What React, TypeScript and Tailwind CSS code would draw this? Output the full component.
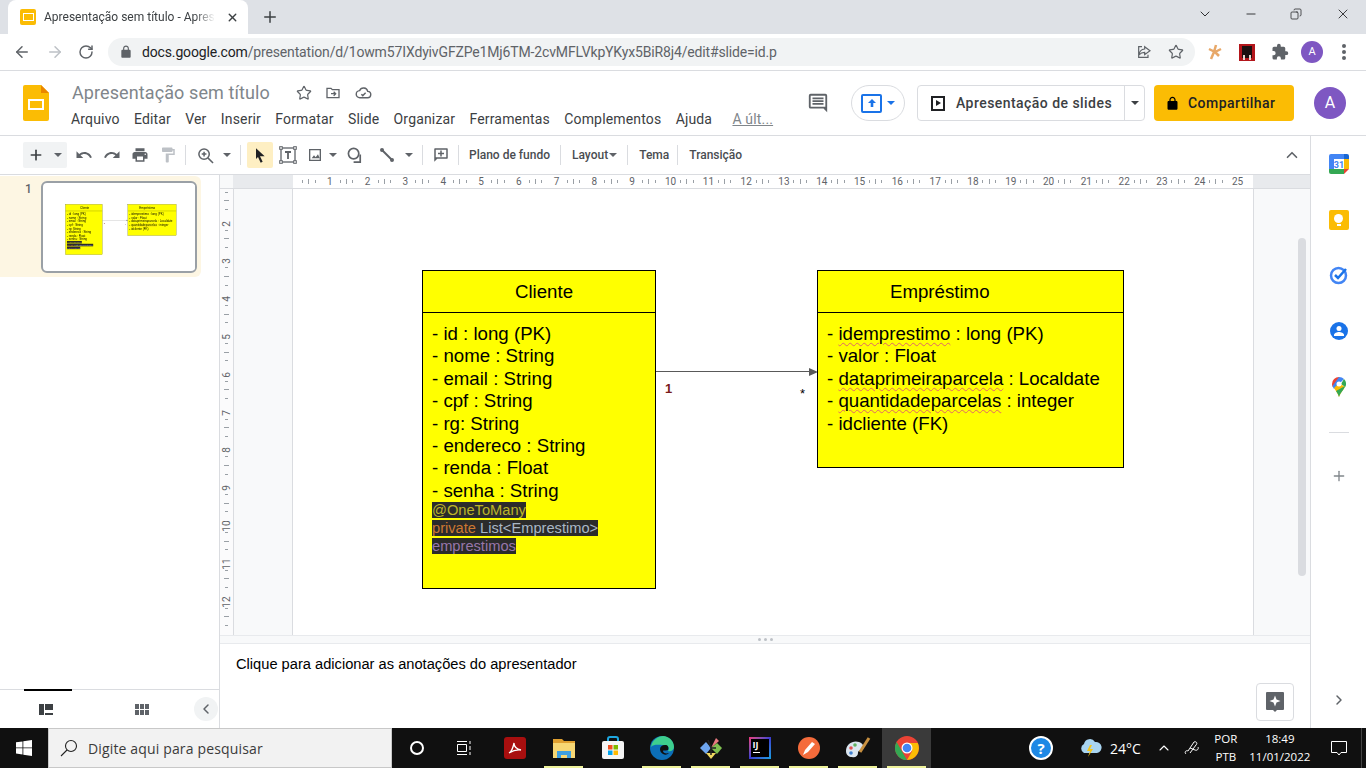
import type { ReactNode } from "react";
import {
  ArrowLeft,
  ArrowRight,
  ChevronDown,
  ChevronLeft,
  ChevronRight,
  ChevronUp,
  Copy,
  Minus,
  Plus,
  RotateCw,
  Star,
  X,
} from "lucide-react";

const menus = ["Arquivo", "Editar", "Ver", "Inserir", "Formatar", "Slide", "Organizar", "Ferramentas", "Complementos", "Ajuda"];

const clienteRows = [
  "- id : long (PK)",
  "- nome : String",
  "- email : String",
  "- cpf : String",
  "- rg: String",
  "- endereco : String",
  "- renda : Float",
  "- senha : String",
];

const lockPath =
  "M18 8h-1V6c0-2.760-2.240-5-5-5S7 3.240 7 6v2H6c-1.100 0-2 .900-2 2v10c0 1.100.900 2 2 2h12c1.100 0 2-.900 2-2V10c0-1.100-.900-2-2-2zM9 6c0-1.660 1.340-3 3-3s3 1.340 3 3v2H9V6z";

const Icon = ({ d, size = 18, color = "#5f6368", view = 24 }: { d: string; size?: number; color?: string; view?: number }) => (
  <svg width={size} height={size} viewBox={`0 0 ${view} ${view}`} fill={color}>
    <path d={d} />
  </svg>
);

const Caret = ({ color = "#5f6368" }: { color?: string }) => (
  <span className="block h-0 w-0 border-x-[4px] border-t-[4px] border-x-transparent" style={{ borderTopColor: color }} />
);

const Sep = () => <span className="block h-[20px] w-px bg-[#dadce0]" />;

const Squiggle = ({ children }: { children: ReactNode }) => (
  <span className="underline decoration-wavy decoration-[#e06666] decoration-1 underline-offset-2">{children}</span>
);

const Ruler = () => (
  <div className="flex h-[13px] w-[960px] bg-white text-[10px] leading-[13px] text-[#5f6368]">
    {Array.from({ length: 25 }, (_, i) => (
      <div key={i} className="flex w-[37.8px] shrink-0 items-center justify-between pl-[9px]">
        <span className="h-[3px] w-px bg-[#9aa0a6]" />
        <span className="h-[5px] w-px bg-[#9aa0a6]" />
        <span className="h-[3px] w-px bg-[#9aa0a6]" />
        <span className="w-[10px] translate-x-[4px] text-center">{i + 1}</span>
      </div>
    ))}
  </div>
);

const VerticalRuler = () => (
  <div className="flex w-[13px] flex-col items-center bg-[#fbfbfc] text-[10px] text-[#5f6368]">
    {Array.from({ length: 13 }, (_, i) => (
      <div key={i} className="flex h-[37.8px] w-full shrink-0 flex-col items-center justify-between">
        <span className="h-px w-[3px] bg-[#9aa0a6]" />
        <span className="h-px w-[5px] bg-[#9aa0a6]" />
        <span className="h-px w-[3px] bg-[#9aa0a6]" />
        <span className="flex h-[12px] -rotate-90 items-center leading-none">{i >= 1 && i < 12 ? i + 1 : ""}</span>
      </div>
    ))}
  </div>
);

// slide content, also used scaled down for the thumbnail
const Slide = () => (
  <div className="relative h-[540px] w-[960px] bg-white font-['Liberation_Sans',sans-serif] text-black">
    <div className="absolute left-[129px] top-[122px] flex h-[319px] w-[234px] flex-col border border-black bg-[#ffff00]">
      <div className="flex h-[42px] shrink-0 items-center justify-center border-b border-black pl-[10px] text-[18.67px]">Cliente</div>
      <div className="px-[9px] pt-[10px] text-[18.67px] leading-[22.4px]">
        {clienteRows.map((row) => (
          <div key={row}>{row}</div>
        ))}
        <div className="text-[14.67px] leading-[17.8px]">
          <div><span className="bg-[#2b2b2b] text-[#bbb529]">@OneToMany</span></div>
          <div>
            <span className="bg-[#2b2b2b]">
              <span className="text-[#cc7832]">private </span>
              <span className="text-[#a9b7c6]">List&lt;Emprestimo&gt;</span>
            </span>
          </div>
          <div><span className="bg-[#2b2b2b] text-[#9876aa]">emprestimos</span></div>
        </div>
      </div>
    </div>

    <div className="absolute left-[363px] top-[223px] h-px w-[155px] bg-[#595959]" />
    <div className="absolute left-[516px] top-[220px] h-0 w-0 border-y-[4px] border-l-[9px] border-y-transparent border-l-[#595959]" />
    <div className="absolute left-[372px] top-[233px] text-[13px] font-bold leading-[15px] text-[#7a1c1c]">1</div>
    <div className="absolute left-[507px] top-[238px] text-[13px] leading-[15px]">*</div>

    <div className="absolute left-[524px] top-[122px] flex h-[198px] w-[307px] flex-col border border-black bg-[#ffff00]">
      <div className="flex h-[42px] shrink-0 items-center border-b border-black pl-[72px] text-[18.67px]">Empréstimo</div>
      <div className="px-[9px] pt-[10px] text-[18.67px] leading-[22.4px]">
        <div>- <Squiggle>idemprestimo</Squiggle> : long (PK)</div>
        <div>- valor : Float</div>
        <div>- <Squiggle>dataprimeiraparcela</Squiggle> : Localdate</div>
        <div>- <Squiggle>quantidadeparcelas</Squiggle> : integer</div>
        <div>- idcliente (FK)</div>
      </div>
    </div>
  </div>
);

const ChromeBar = () => (
  <>
    <div className="flex h-[34px] shrink-0 items-end bg-[#dee1e6] pl-[8px]">
      <div className="flex h-[34px] w-[240px] items-center rounded-t-[8px] bg-white pl-[12px] pr-[9px] text-[12px] text-[#3c4043]">
        <span className="flex h-[16px] w-[16px] shrink-0 items-center justify-center rounded-[2px] bg-[#fbbc04]">
          <span className="h-[8px] w-[11px] border border-white" />
        </span>
        <span className="ml-[8px] whitespace-nowrap [mask-image:linear-gradient(to_right,black_88%,transparent)]">Apresentação sem título - Apres</span>
        <X size={13} strokeWidth={2.5} className="ml-auto text-[#3c4043]" />
      </div>
      <Plus size={18} strokeWidth={2} className="mb-[8px] ml-[13px] text-[#3c4043]" />
      <div className="ml-auto flex h-[28px] items-center self-start text-[#202124]">
        <ChevronDown size={16} strokeWidth={1.4} className="mr-[31px]" />
        <Minus size={14} strokeWidth={1.5} className="mr-[32px]" />
        <Copy size={12} strokeWidth={1.5} className="mr-[33px] -scale-x-100" />
        <X size={16} strokeWidth={1.3} className="mr-[15px]" />
      </div>
    </div>
    <div className="flex h-[37px] shrink-0 items-center border-b border-[#dadce0] bg-white">
      <ArrowLeft size={18} strokeWidth={2} className="ml-[13px] text-[#5f6368]" />
      <ArrowRight size={18} strokeWidth={2} className="ml-[15px] text-[#bdc1c6]" />
      <RotateCw size={16} strokeWidth={2.2} className="ml-[14px] text-[#5f6368]" />
      <div className="ml-[14px] flex h-[28px] w-[1087px] items-center rounded-full bg-[#f1f3f4] pl-[11px] pr-[10px] text-[14px] tracking-[-0.15px] text-[#5f6368]">
        <Icon d={lockPath} size={14} />
        <span className="ml-[9px] whitespace-nowrap">
          <span className="text-[#202124]">docs.google.com</span>/presentation/d/1owm57IXdyivGFZPe1Mj6TM-2cvMFLVkpYKyx5BiR8j4/edit#slide=id.p
        </span>
        <span className="ml-auto mr-[16px]">
          <svg width="16" height="16" viewBox="0 0 24 24" fill="none" stroke="#5f6368" strokeWidth="1.8">
            <path d="M13 4l8 6-8 6v-3.500c-4 0-6.500 1.500-8.500 4 .5-5 3.500-8.500 8.500-9V4zM9 4H4v16h14v-4" />
          </svg>
        </span>
        <Star size={16} strokeWidth={1.8} className="mr-[1px]" />
      </div>
      <svg className="ml-[11px]" width="18" height="18" viewBox="0 0 18 18" fill="none">
        <path d="M10 2L8 9M8 9l-3 7M3 6l6 3M9 9l6-3M9 9l4 4" stroke="#e8a868" strokeWidth="2.5" />
      </svg>
      <svg className="ml-[15px]" width="16" height="17" viewBox="0 0 16 17">
        <rect width="16" height="17" fill="#b3161b" />
        <rect x="3" y="2" width="10" height="12" fill="#1c1010" />
        <path d="M4 16v-5h2v5zM10 16v-5h2v5z" fill="#e8d8d0" />
      </svg>
      <svg className="ml-[16px]" width="18" height="18" viewBox="0 0 24 24" fill="#5f6368">
        <path d="M20.500 11H19V7a2 2 0 0 0-2-2h-4V3.500a2.500 2.500 0 0 0-5 0V5H4a2 2 0 0 0-2 2v3.800h1.500a2.700 2.700 0 0 1 0 5.400H2V20a2 2 0 0 0 2 2h3.800v-1.500a2.700 2.700 0 0 1 5.400 0V22H17a2 2 0 0 0 2-2v-4h1.500a2.500 2.500 0 0 0 0-5z" />
      </svg>
      <span className="ml-[12px] flex h-[22px] w-[22px] shrink-0 items-center justify-center rounded-full bg-[#7e57c2] text-[11px] text-white">A</span>
      <svg className="ml-[19px] shrink-0" width="4" height="16" viewBox="0 0 4 16" fill="#5f6368">
        <circle cx="2" cy="2" r="2" />
        <circle cx="2" cy="8" r="2" />
        <circle cx="2" cy="14" r="2" />
      </svg>
    </div>
  </>
);

const DocsHeader = () => (
  <div className="flex h-[65px] shrink-0 border-b border-[#dadce0] bg-white">
    <svg className="ml-[23px] mt-[14px]" width="26" height="36" viewBox="0 0 26 36">
      <path d="M2 0h16l8 8v26a2 2 0 0 1-2 2H2a2 2 0 0 1-2-2V2a2 2 0 0 1 2-2z" fill="#fbbc04" />
      <path d="M18 0l8 8h-8z" fill="#ea8600" />
      <rect x="6" y="15" width="14" height="9" fill="none" stroke="#fff" strokeWidth="2" />
    </svg>
    <div className="ml-[22px] flex flex-col">
      <div className="mt-[10px] flex h-[24px] items-center">
        <span className="pl-[1px] text-[18px] leading-[24px] tracking-[0.1px] text-[#80868b]">Apresentação sem título</span>
        <Star size={16} strokeWidth={1.8} className="ml-[26px] text-[#5f6368]" />
        <svg className="ml-[13px]" width="16" height="16" viewBox="0 0 24 24" fill="none" stroke="#5f6368" strokeWidth="2">
          <path d="M3 5h6l2 2h10v12H3zM9 13h7m-3-3l3 3-3 3" />
        </svg>
        <svg className="ml-[14px]" width="17" height="17" viewBox="0 0 24 24" fill="none" stroke="#5f6368" strokeWidth="2">
          <path d="M7 18a5 5 0 0 1-.500-10A6 6 0 0 1 18 9a4.500 4.500 0 0 1-.500 9zM9 13l2 2 4-4" />
        </svg>
      </div>
      <div className="mt-[4px] flex items-center gap-[14.3px] text-[14px] leading-[20px] tracking-[0.16px] text-[#3c4043]">
        {menus.map((m) => (
          <span key={m}>{m}</span>
        ))}
        <span className="ml-[6px] text-[#80868b] underline">A últ...</span>
      </div>
    </div>
    <div className="ml-auto flex items-start pt-[14px]">
      <svg className="mt-[7px]" width="22" height="22" viewBox="0 0 24 24" fill="#5f6368">
        <path d="M22 4a2 2 0 0 0-2-2H4a2 2 0 0 0-2 2v12a2 2 0 0 0 2 2h14l4 4zM20 16H4V4h16zM6 12h12v2H6zM6 9h12v2H6zM6 6h12v2H6z" />
      </svg>
      <div className="ml-[22px] flex h-[36px] w-[54px] items-center justify-center gap-[5px] rounded-full border border-[#dadce0]">
        <span className="flex h-[19px] w-[21px] items-center justify-center rounded-[2px] border-2 border-[#1a73e8]">
          <svg width="10" height="10" viewBox="0 0 10 10" fill="#1a73e8"><path d="M5 1l4 4H6.300v4H3.700V5H1z" /></svg>
        </span>
        <Caret color="#1a73e8" />
      </div>
      <div className="ml-[12px] flex h-[36px] w-[228px] items-center rounded-[4px] border border-[#dadce0] text-[14px] font-medium tracking-[0.45px] text-[#3c4043]">
        <span className="ml-[13px] flex h-[15px] w-[14px] items-center justify-center border-2 border-[#202124]">
          <span className="h-0 w-0 border-y-[3px] border-l-[5px] border-y-transparent border-l-[#202124]" />
        </span>
        <span className="ml-[11px] whitespace-nowrap">Apresentação de slides</span>
        <span className="ml-auto flex h-full w-[20px] items-center justify-center border-l border-[#dadce0]">
          <Caret color="#3c4043" />
        </span>
      </div>
      <div className="ml-[9px] flex h-[36px] w-[140px] items-center rounded-[4px] bg-[#fbbc04] pl-[11px] text-[14px] font-medium tracking-[0.45px] text-[#202124]">
        <Icon d={lockPath} size={15} color="#000" />
        <span className="ml-[8px]">Compartilhar</span>
      </div>
      <span className="ml-[20px] mr-[20px] mt-[2px] flex h-[32px] w-[32px] items-center justify-center rounded-full bg-[#7e57c2] text-[16px] text-white">A</span>
    </div>
  </div>
);

const Tool = ({ children, w = 28 }: { children: ReactNode; w?: number }) => (
  <span className="flex h-[26px] shrink-0 items-center justify-center" style={{ width: w }}>
    {children}
  </span>
);

const Toolbar = () => (
  <div className="flex h-[39px] shrink-0 items-center border-b border-[#dadce0] bg-white pl-[23px] pr-[9px]">
    <div className="flex h-[26px] w-[44px] items-center justify-center gap-[10px] rounded-[2px] bg-[#f1f3f4]">
      <Plus size={16} strokeWidth={2.5} className="text-[#3c4043]" />
      <Caret />
    </div>
    <span className="w-[3px]" />
    <Tool><Icon d="M12.500 8c-2.650 0-5.050 1-6.900 2.600L2 7v9h9l-3.620-3.620c1.390-1.160 3.160-1.880 5.120-1.880 3.540 0 6.550 2.310 7.600 5.500l2.370-.780C21.080 11.030 17.150 8 12.500 8z" /></Tool>
    <Tool><Icon d="M18.400 10.600C16.550 9 14.150 8 11.500 8c-4.650 0-8.580 3.030-9.960 7.220L3.900 16c1.050-3.190 4.050-5.500 7.600-5.500 1.950 0 3.730.720 5.120 1.880L13 16h9V7z" /></Tool>
    <Tool><Icon d="M19 8H5c-1.660 0-3 1.340-3 3v6h4v4h12v-4h4v-6c0-1.660-1.340-3-3-3zm-3 11H8v-5h8v5zm3-7c-.550 0-1-.450-1-1s.450-1 1-1 1 .450 1 1-.450 1-1 1zm-1-9H6v4h12V3z" /></Tool>
    <Tool><Icon color="#bdc1c6" d="M18 4V3c0-.550-.450-1-1-1H5c-.550 0-1 .450-1 1v4c0 .550.450 1 1 1h12c.550 0 1-.450 1-1V6h1v4H9v11c0 .550.450 1 1 1h2c.550 0 1-.450 1-1v-9h8V4h-3z" /></Tool>
    <span className="ml-[3px] mr-[4px]"><Sep /></span>
    <Tool w={30}>
      <svg width="17" height="17" viewBox="0 0 18 18" fill="none" stroke="#5f6368" strokeWidth="1.600">
        <circle cx="7.500" cy="7.500" r="5.500" />
        <path d="M11.500 11.500L17 17M7.500 5v5M5 7.500h5" />
      </svg>
    </Tool>
    <Tool w={14}><Caret /></Tool>
    <span className="mx-[6px]"><Sep /></span>
    <span className="flex h-[26px] w-[26px] items-center justify-center rounded-[2px] bg-[#feefc3]">
      <Icon size={16} color="#202124" d="M6 2l13 12h-7l4 8-3 1.500-4-8.500-3 3z" />
    </span>
    <Tool w={30}>
      <svg width="18" height="18" viewBox="0 0 18 18" fill="none" stroke="#5f6368" strokeWidth="1.300">
        <rect x="2" y="2" width="14" height="14" />
        <path d="M6 6h6M9 6v7" strokeWidth="1.800" />
        <rect x=".7" y=".7" width="2.600" height="2.600" fill="#fff" strokeWidth="1" />
        <rect x="14.700" y=".7" width="2.600" height="2.600" fill="#fff" strokeWidth="1" />
        <rect x=".7" y="14.700" width="2.600" height="2.600" fill="#fff" strokeWidth="1" />
        <rect x="14.700" y="14.700" width="2.600" height="2.600" fill="#fff" strokeWidth="1" />
      </svg>
    </Tool>
    <Tool w={24}><Icon size={16} d="M21 3H3v18h18zm-2 16H5V5h14zM7 17l3.500-4.500 2.500 3 3.500-4.500 2.500 6z" /></Tool>
    <Tool w={12}><Caret /></Tool>
    <Tool w={32}>
      <svg width="17" height="17" viewBox="0 0 18 18" fill="none" stroke="#5f6368" strokeWidth="1.800">
        <circle cx="7" cy="7" r="5.500" />
        <path d="M14 8v8H7" />
      </svg>
    </Tool>
    <Tool w={31}>
      <svg width="16" height="16" viewBox="0 0 16 16" stroke="#5f6368" strokeWidth="2" fill="#5f6368">
        <path d="M3 3l10 10" />
        <circle cx="3" cy="3" r="1" />
        <circle cx="13" cy="13" r="1" />
      </svg>
    </Tool>
    <Tool w={14}><Caret /></Tool>
    <span className="mx-[6px]"><Sep /></span>
    <Tool w={24}><Icon size={18} d="M20 3H4a1 1 0 0 0-1 1v17l4-4h13a1 1 0 0 0 1-1V4a1 1 0 0 0-1-1zm-1 12H5V5h14zM11 6h2v3h3v2h-3v3h-2v-3H8V9h3z" /></Tool>
    <span className="ml-[5px]"><Sep /></span>
    <div className="flex items-center text-[12px] font-medium text-[#4a4d51]">
      <span className="ml-[10px]">Plano de fundo</span>
      <span className="ml-[10px]"><Sep /></span>
      <span className="ml-[11px]">Layout</span>
      <span className="ml-[1px]"><Caret /></span>
      <span className="ml-[10px]"><Sep /></span>
      <span className="ml-[11px]">Tema</span>
      <span className="ml-[8px]"><Sep /></span>
      <span className="ml-[11px]">Transição</span>
    </div>
    <ChevronUp size={18} strokeWidth={2.2} className="ml-auto text-[#5f6368]" />
  </div>
);

const Filmstrip = () => (
  <div className="flex w-[220px] shrink-0 flex-col border-r border-[#dadce0] bg-white">
    <div className="flex-1">
      <div className="mt-[1px] flex h-[101px] w-[201px] rounded-r-[6px] bg-[#fdf6e3]">
        <span className="ml-[25px] mt-[4px] text-[12px] font-medium text-[#5f6368]">1</span>
        <div className="ml-[9px] mt-[5px] h-[92px] w-[156px] overflow-hidden rounded-[6px] border-2 border-[#9aa0a6] bg-white pl-[2px] pt-[2px]">
          <div className="h-[85px] w-[152px] overflow-hidden">
            <div className="origin-top-left scale-[0.158]">
              <Slide />
            </div>
          </div>
        </div>
      </div>
    </div>
    <div className="relative flex h-[39px] shrink-0 items-center border-t border-[#dadce0]">
      <span className="absolute left-[24px] top-[-1px] h-[2px] w-[48px] bg-black" />
      <span className="ml-[39px] flex h-[11px] w-[14px] gap-[1px]">
        <span className="h-full w-[5px] bg-[#3c4043]" />
        <span className="flex flex-1 flex-col justify-between">
          <span className="h-[6px] bg-[#3c4043]" />
          <span className="h-[2px] bg-[#3c4043]" />
        </span>
      </span>
      <span className="ml-[82px] grid h-[11px] w-[14px] grid-cols-3 gap-[1px]">
        {Array.from({ length: 6 }, (_, i) => (
          <span key={i} className="bg-[#5f6368]" />
        ))}
      </span>
      <span className="ml-[45px] flex h-[24px] w-[24px] items-center justify-center rounded-full bg-[#f1f3f4]">
        <ChevronLeft size={16} strokeWidth={2.2} className="text-[#5f6368]" />
      </span>
    </div>
  </div>
);

const Editor = () => (
  <div className="flex min-w-0 flex-1 flex-col">
    <div className="flex h-[460px] shrink-0 flex-col bg-[#f8f9fa]">
      <div className="flex h-[14px] shrink-0 border-b border-[#dadce0] bg-[#e8eaed]">
        <span className="w-[13px] shrink-0 bg-[#f8f9fa]" />
        <span className="w-[60px] shrink-0" />
        <Ruler />
      </div>
      <div className="relative flex flex-1 overflow-hidden">
        <div className="h-full overflow-hidden border-r border-[#dadce0]">
          <div className="mt-[-35px]">
            <VerticalRuler />
          </div>
        </div>
        <div className="ml-[58px] h-full overflow-hidden border-l border-r border-[#dadce0]">
          <div className="mt-[-41px]">
            <Slide />
          </div>
        </div>
        <span className="absolute left-[1078px] top-[49px] h-[338px] w-[8px] rounded-full bg-[#dadce0]" />
      </div>
    </div>
    <div className="flex h-[9px] shrink-0 items-center justify-center gap-[3px] border-y border-[#e8eaed] bg-[#f8f9fa]">
      <span className="h-[3px] w-[3px] rounded-full bg-[#bdc1c6]" />
      <span className="h-[3px] w-[3px] rounded-full bg-[#bdc1c6]" />
      <span className="h-[3px] w-[3px] rounded-full bg-[#bdc1c6]" />
    </div>
    <div className="flex flex-1 flex-col bg-white pl-[16px] pr-[16px] font-['Liberation_Sans',sans-serif]">
      <div className="mt-[11px] text-[14.67px] leading-[18px] text-black">Clique para adicionar as anotações do apresentador</div>
      <div className="mt-auto mb-[7px] flex h-[38px] w-[38px] items-center justify-center self-end rounded-[4px] border border-[#dadce0]">
        <svg width="18" height="20" viewBox="0 0 18 20">
          <path d="M1 0h16a1 1 0 0 1 1 1v16a1 1 0 0 1-1 1h-6l-2 2-2-2H1a1 1 0 0 1-1-1V1a1 1 0 0 1 1-1z" fill="#5f6368" />
          <path d="M9 3.500l1.500 4 4 1.500-4 1.500-1.500 4-1.500-4-4-1.500 4-1.500z" fill="#fff" />
        </svg>
      </div>
    </div>
  </div>
);

const SidePanel = () => (
  <div className="flex w-[56px] shrink-0 flex-col items-center border-l border-[#dadce0] bg-white">
    <svg className="mt-[18px]" width="20" height="20" viewBox="0 0 20 20">
      <rect width="20" height="20" rx="2" fill="#fff" />
      <path d="M5 0h10v5H5z" fill="#4285f4" />
      <path d="M0 5h5v10H0zM0 2a2 2 0 0 1 2-2h3v5H0z" fill="#4285f4" />
      <path d="M15 0h3a2 2 0 0 1 2 2v3h-5z" fill="#1967d2" />
      <path d="M15 5h5v10h-5z" fill="#fbbc04" />
      <path d="M0 15h15v5H2a2 2 0 0 1-2-2z" fill="#34a853" />
      <path d="M15 15h5l-5 5z" fill="#ea4335" />
      <text x="10" y="13.500" textAnchor="middle" fontSize="9" fontWeight="700" fill="#4285f4" fontFamily="Roboto">31</text>
    </svg>
    <span className="mt-[36px] flex h-[20px] w-[20px] flex-col items-center justify-center gap-[1px] rounded-[2px] bg-[#fbbc04]">
      <span className="h-[9px] w-[9px] rounded-full bg-white" />
      <span className="h-[2px] w-[4px] bg-white" />
    </span>
    <svg className="mt-[35px]" width="20" height="20" viewBox="0 0 20 20" fill="none" stroke="#1a73e8">
      <circle cx="9.500" cy="10.500" r="7.500" strokeWidth="2.500" stroke="#4285f4" />
      <path d="M6 10l3 3 8-9" strokeWidth="2.500" />
    </svg>
    <svg className="mt-[37px]" width="18" height="18" viewBox="0 0 18 18">
      <circle cx="9" cy="9" r="9" fill="#1a73e8" />
      <circle cx="9" cy="6.500" r="2.500" fill="#fff" />
      <path d="M4 13c0-2 3-3 5-3s5 1 5 3v1H4z" fill="#fff" />
    </svg>
    <svg className="mt-[37px]" width="14" height="20" viewBox="0 0 14 20">
      <path d="M7 0a7 7 0 0 0-7 7c0 1.500.500 2.600 1.200 3.600L7 5z" fill="#ea4335" />
      <path d="M7 0a7 7 0 0 1 5 2L2 12 .500 9z" fill="#4285f4" />
      <path d="M12 2a7 7 0 0 1 1.200 8L9 7z" fill="#34a853" />
      <path d="M2 11l5-5 6 4c-2 3-4 5-6 10-1-3-3-6-5-9z" fill="#fbbc04" />
      <path d="M7 20c-.500-2-1.500-4-3-6l9-5c-1 4-4.500 6-6 11z" fill="#34a853" />
      <circle cx="7" cy="7" r="2.500" fill="#fff" />
    </svg>
    <span className="mt-[35px] h-px w-[20px] bg-[#dadce0]" />
    <Plus size={16} strokeWidth={2} className="mt-[35px] text-[#80868b]" />
    <ChevronRight size={16} strokeWidth={2.2} className="mt-auto mb-[20px] text-[#5f6368]" />
  </div>
);

const TaskCell = ({ children, open, active }: { children: ReactNode; open?: boolean; active?: boolean }) => (
  <span className={`relative flex h-full w-[49px] shrink-0 items-center justify-center ${active ? "bg-[#3a3a3a]" : ""}`}>
    {children}
    {open && <span className="absolute bottom-0 left-[5px] h-[2px] w-[39px] bg-[#eef29a]" />}
  </span>
);

const Taskbar = () => (
  <div className="flex h-[40px] shrink-0 items-center bg-[#101010] font-['Open_Sans',sans-serif] text-white">
    <span className="flex h-full w-[48px] items-center justify-center">
      <svg width="16" height="16" viewBox="0 0 16 16" fill="#fff">
        <path d="M0 2.300L6.500 1.400V7.500H0zM7.300 1.300L16 0V7.500H7.300zM0 8.300H6.500V14.500L0 13.600zM7.300 8.300H16V16L7.300 14.700z" />
      </svg>
    </span>
    <div className="flex h-full w-[344px] items-center border border-[#c8c8c8] bg-[#f2f2f2] text-[14px] tracking-[0.15px] text-[#3b3b3b]">
      <svg className="ml-[11px]" width="18" height="18" viewBox="0 0 18 18" fill="none" stroke="#222" strokeWidth="1.100">
        <circle cx="11" cy="7" r="5.500" />
        <path d="M7 11l-6 6" />
      </svg>
      <span className="ml-[10px]">Digite aqui para pesquisar</span>
    </div>
    <TaskCell><span className="h-[14px] w-[14px] rounded-full border-2 border-white" /></TaskCell>
    <TaskCell>
      <svg className="-ml-[3px]" width="16" height="16" viewBox="0 0 16 16" fill="none" stroke="#fff" strokeWidth="1">
        <path d="M1 1.500h10M1 14.500h10M1.500 4.500h9v7h-9zM14 1v3M14 6v4M14 12v3" />
      </svg>
    </TaskCell>
    <TaskCell>
      <span className="flex h-[22px] w-[22px] items-center justify-center rounded-[3px] bg-[#a80f0f]">
        <svg width="14" height="14" viewBox="0 0 14 14" fill="none" stroke="#fff" strokeWidth="1.300">
          <path d="M1 12c2-1 4-5 5-10 0 3 2 6 7 7-4-.500-8 .500-12 3z" />
        </svg>
      </span>
    </TaskCell>
    <TaskCell open>
      <svg width="22" height="20" viewBox="0 0 22 20">
        <path d="M0 1h9l2 2h11v3H0z" fill="#e0a030" />
        <path d="M0 5h22v15H0z" fill="#f7d774" />
        <path d="M4 13h14v7h-4v-3H8v3H4z" fill="#3f9fe0" />
      </svg>
    </TaskCell>
    <TaskCell>
      <svg width="24" height="24" viewBox="0 0 24 24">
        <path d="M7 7V3a2 2 0 0 1 2-2h6a2 2 0 0 1 2 2v4" fill="none" stroke="#1ea7e0" strokeWidth="2" />
        <rect x="1" y="5" width="22" height="18" rx="2" fill="#f5f5f5" />
        <rect x="7" y="9" width="4.500" height="4.500" fill="#f25022" />
        <rect x="12.500" y="9" width="4.500" height="4.500" fill="#7fba00" />
        <rect x="7" y="14.500" width="4.500" height="4.500" fill="#00a4ef" />
        <rect x="12.500" y="14.500" width="4.500" height="4.500" fill="#ffb900" />
      </svg>
    </TaskCell>
    <TaskCell open>
      <svg width="24" height="24" viewBox="0 0 24 24">
        <circle cx="12" cy="12" r="12" fill="#0c6fb8" />
        <path d="M1 11C2 4 8 0 13 0c6 0 11 5 11 11 0 3-3 5-6 4 2-3 0-6-5-6-5 0-9-1-12 2z" fill="#3ecf8e" />
        <path d="M10 13c0-2 2-4 5-4s4 2 3 5c-3 1-5 0-5 1 0 2 3 3 6 2-2 2-4 2-6 1-2-1-3-3-3-5z" fill="#101010" />
      </svg>
    </TaskCell>
    <TaskCell open>
      <svg width="24" height="24" viewBox="0 0 24 24">
        <path d="M12 12l5-10 3 3z" fill="#e87a80" />
        <path d="M1 12l6-6 5 6-5 6z" fill="#6ea6f0" />
        <path d="M12 12l6-5 5 5-5 6z" fill="#7fc050" />
        <path d="M7 17h10l-5 6z" fill="#f0d860" />
        <path d="M9 4l3 8v7M12 12l5 0" stroke="#222" strokeWidth="1.500" fill="none" />
      </svg>
    </TaskCell>
    <TaskCell open>
      <span className="flex h-[22px] w-[22px] items-center justify-center bg-gradient-to-br from-[#f0307a] via-[#3a3ad0] to-[#12a0e0] p-[2px]">
        <span className="flex h-full w-full flex-col bg-black pl-[2px] text-[9px] font-bold leading-[11px] text-white">
          IJ
          <span className="mt-[2px] h-px w-[7px] bg-white" />
        </span>
      </span>
    </TaskCell>
    <TaskCell open>
      <svg width="22" height="22" viewBox="0 0 22 22">
        <circle cx="11" cy="11" r="11" fill="#f46b3b" />
        <path d="M5 18l2-5 7-8 3 2-7 8z" fill="#fff" />
      </svg>
    </TaskCell>
    <TaskCell open>
      <svg width="26" height="24" viewBox="0 0 26 24">
        <path d="M1 15C1 8 8 4 14 6c5 2 6 6 3 8-2 1-4 0-4 3s-3 5-6 4c-3 0-6-2-6-6z" fill="#dbe6f0" />
        <circle cx="6" cy="12" r="1.800" fill="#e05050" />
        <circle cx="10" cy="9" r="1.800" fill="#60b060" />
        <circle cx="6" cy="17" r="1.800" fill="#4080d0" />
        <path d="M15 16L24 2" stroke="#c89040" strokeWidth="3" />
      </svg>
    </TaskCell>
    <TaskCell open active>
      <svg width="24" height="24" viewBox="0 0 24 24">
        <circle cx="12" cy="12" r="12" fill="#ea4335" />
        <path d="M12 24A12 12 0 0 1 1.600 6l5.200 9z" fill="#34a853" />
        <path d="M12 7h10.800A12 12 0 0 1 12 24l5.200-9z" fill="#fbbc04" />
        <circle cx="12" cy="12" r="5.500" fill="#fff" />
        <circle cx="12" cy="12" r="4.300" fill="#4285f4" />
      </svg>
    </TaskCell>
    <span className="ml-[98px] flex h-[24px] w-[24px] items-center justify-center rounded-full border-2 border-white bg-[#1e88e5] text-[15px] font-bold leading-none">?</span>
    <svg className="ml-[25px]" width="24" height="20" viewBox="0 0 24 20">
      <path d="M6 15a5 5 0 0 1 0-9 6 6 0 0 1 11-2 5 5 0 0 1 2 11z" fill="#a8d4f0" />
      <path d="M12 7l-3 6h3l-2 6 5-8h-3l2-4z" fill="#f5c518" />
    </svg>
    <span className="ml-[8px] text-[14px]">24°C</span>
    <ChevronUp size={16} strokeWidth={1.6} className="ml-[15px]" />
    <svg className="ml-[12px]" width="16" height="16" viewBox="0 0 16 16" fill="none" stroke="#fff" strokeWidth="1">
      <path d="M2 14c-2-2 0-4 2-3l6-9c2-1 4 1 2 3l-6 8M6 8l5 2c2 1 4-1 3-3" />
    </svg>
    <span className="ml-[14px] flex w-[24px] flex-col items-center text-[11.5px] leading-[18px]">
      <span>POR</span>
      <span>PTB</span>
    </span>
    <span className="ml-[9px] flex w-[66px] flex-col items-center text-[11.5px] leading-[18px]">
      <span>18:49</span>
      <span>11/01/2022</span>
    </span>
    <svg className="ml-[17px]" width="18" height="17" viewBox="0 0 18 17" fill="none" stroke="#fff" strokeWidth="1">
      <path d="M1.500 1.500h15v11H11l-2 2.500-2-2.500H1.500z" />
    </svg>
    <span className="ml-auto mr-[4px] h-full w-px bg-[#444]" />
  </div>
);

export default function App() {
  return (
    <div className="flex h-[768px] w-[1366px] flex-col overflow-hidden bg-white font-['Roboto',sans-serif]">
      <ChromeBar />
      <DocsHeader />
      <div className="flex min-h-0 flex-1">
        <div className="flex min-w-0 flex-1 flex-col">
          <Toolbar />
          <div className="flex min-h-0 flex-1">
            <Filmstrip />
            <Editor />
          </div>
        </div>
        <SidePanel />
      </div>
      <Taskbar />
    </div>
  );
}
